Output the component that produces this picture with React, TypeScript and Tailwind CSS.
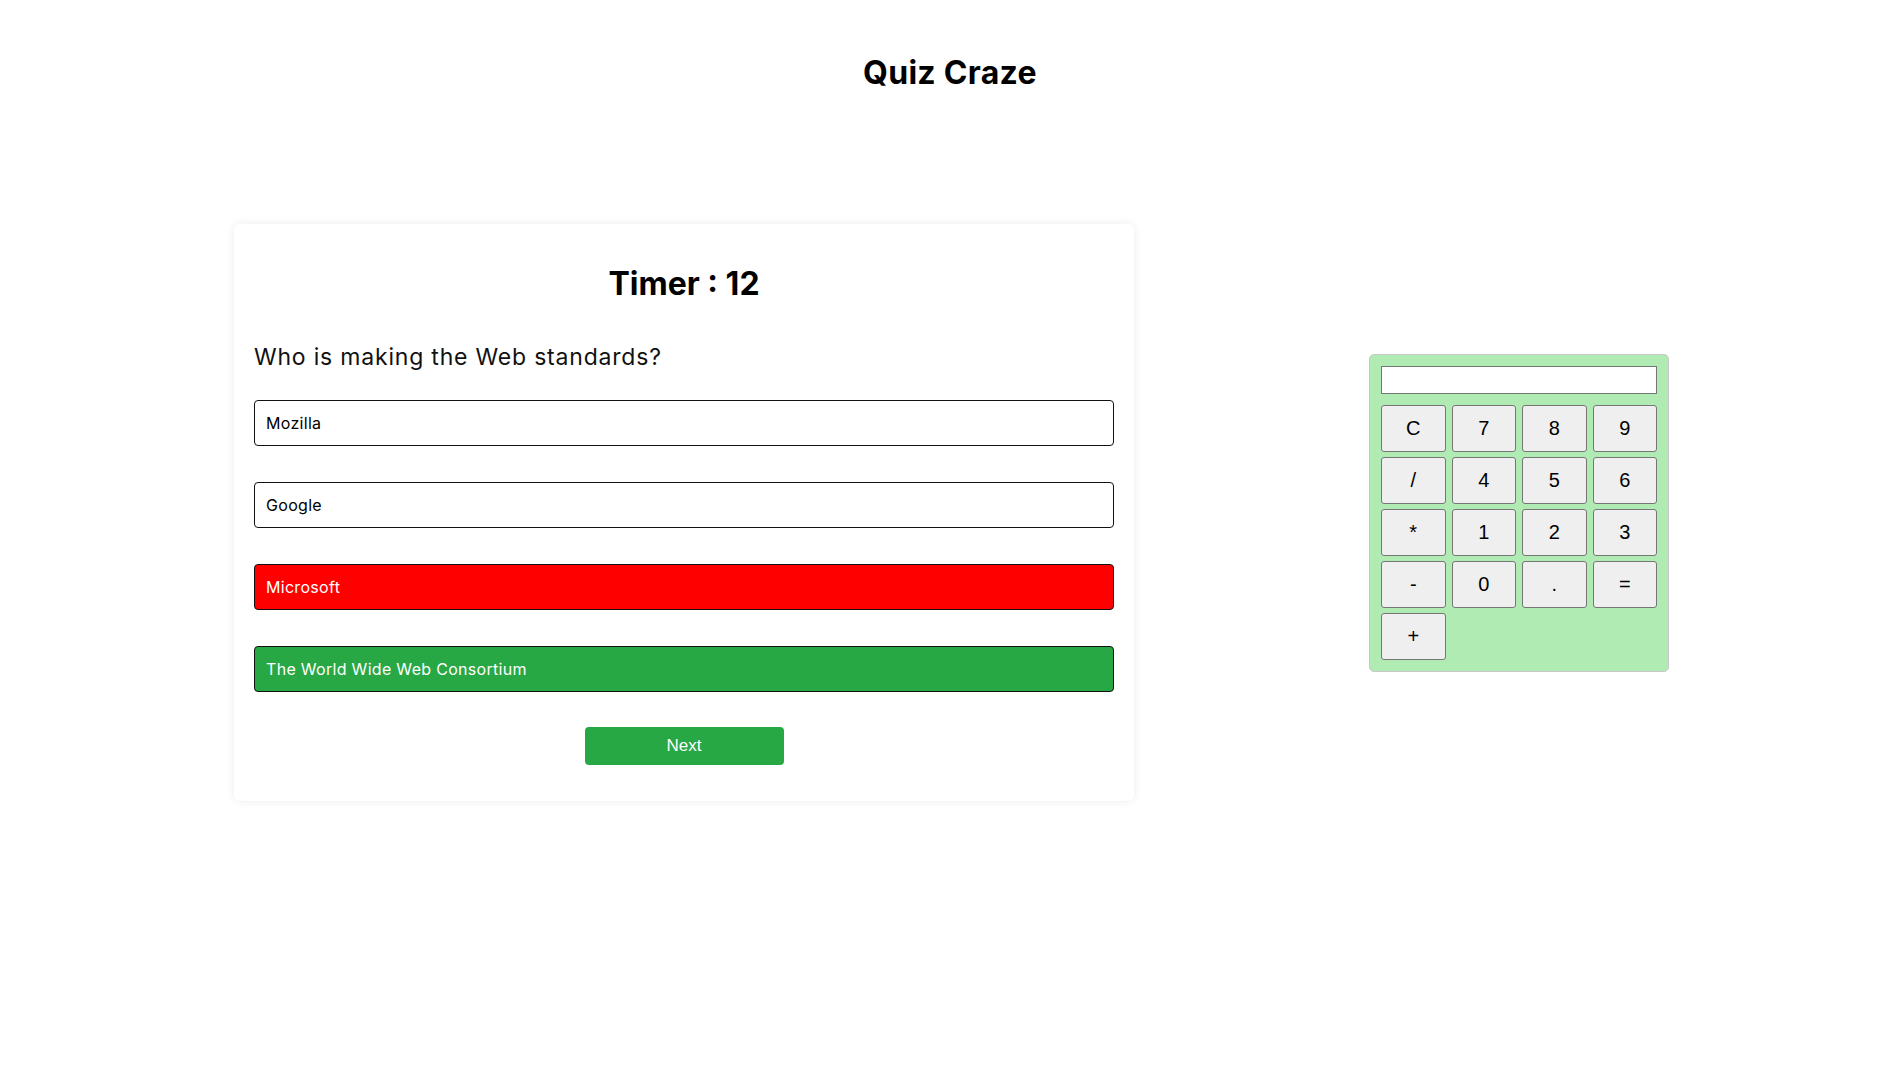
import React from "react";

const options = [
  { label: "Mozilla", cls: "bg-white text-black" },
  { label: "Google", cls: "bg-white text-black" },
  { label: "Microsoft", cls: "bg-[#ff0000] text-white" },
  { label: "The World Wide Web Consortium", cls: "bg-[#28a745] text-white" },
];

const keys = ["C", "7", "8", "9", "/", "4", "5", "6", "*", "1", "2", "3", "-", "0", ".", "=", "+"];

export default function App() {
  return (
    <div className="min-h-[1080px] w-full bg-white text-black font-['Inter',sans-serif]">
      <div className="pt-[53px] flex justify-center">
        <h1 className="text-[32px] leading-[40px] font-bold tracking-[0.3px] pl-[14px]">Quiz Craze</h1>
      </div>
      <div className="mt-[131px] flex items-center pl-[234px]">
        <div className="w-[900px] rounded-[6px] bg-white shadow-[0_0_10px_rgba(0,0,0,0.08)] px-[20px] pt-[40px] pb-[36px]">
          <div className="text-center text-[32px] leading-[40px] font-bold">Timer : 12</div>
          <div className="mt-[37px] text-[23px] leading-[33px] tracking-[0.8px] text-[#111]">Who is making the Web standards?</div>
          <div className="mt-[26px] flex flex-col gap-[36px]">
            {options.map((o) => (
              <div
                key={o.label}
                className={`h-[46px] flex items-center rounded-[4px] border border-[#111] px-[11px] text-[16px] tracking-[0.3px] ${o.cls}`}
              >
                {o.label}
              </div>
            ))}
          </div>
          <div className="mt-[35px] flex justify-center">
            <button className="w-[199px] h-[38px] rounded-[4px] bg-[#28a745] text-white text-[17px] font-['Liberation_Sans',sans-serif]">
              Next
            </button>
          </div>
        </div>
        <div className="ml-[235px] w-[300px] rounded-[5px] border border-[#c8c8c8] bg-[#b1ebb4] p-[11px]">
          <div className="h-[28px] w-full border border-[#767676] bg-white"></div>
          <div className="mt-[11px] grid grid-cols-4 gap-x-[6px] gap-y-[5px]">
            {keys.map((k) => (
              <button
                key={k}
                className="h-[47px] rounded-[3px] border border-[#767676] bg-[#efefef] text-[20px] text-black font-['Liberation_Sans',sans-serif]"
              >
                {k}
              </button>
            ))}
          </div>
        </div>
      </div>
    </div>
  );
}
